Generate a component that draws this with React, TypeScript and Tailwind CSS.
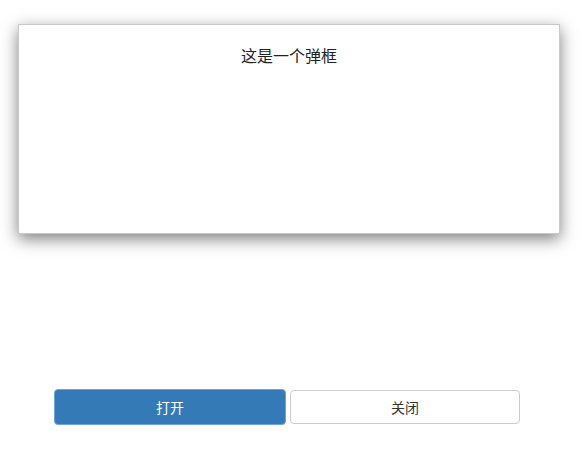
import React, { useState } from "react";

const font = { fontFamily: '"Microsoft YaHei", "Noto Sans CJK SC", "Noto Sans", sans-serif' };

export default function App() {
  const [open, setOpen] = useState(true);

  return (
    <div className="w-[581px] h-[460px] bg-white" style={font}>
      <div className="pt-[24px] pl-[18px] h-[389px]">
        {open && (
          <div className="w-[542px] h-[210px] bg-white border border-[#c8c8c8] shadow-[0_5px_15px_rgba(0,0,0,0.5)]">
            <p className="pt-[18px] text-center text-[16px] leading-[24px] text-[#222]">这是一个弹框</p>
          </div>
        )}
      </div>
      <div className="ml-[54px] flex items-center gap-[4px]">
        <button
          onClick={() => setOpen(true)}
          className="w-[232px] h-[36px] rounded-[4px] bg-[#337ab7] border border-[#6ea2dc] text-white text-[14px]"
        >
          打开
        </button>
        <button
          onClick={() => setOpen(false)}
          className="w-[230px] h-[34px] rounded-[4px] bg-white border border-[#cccccc] text-[#333] text-[14px]"
        >
          关闭
        </button>
      </div>
    </div>
  );
}
